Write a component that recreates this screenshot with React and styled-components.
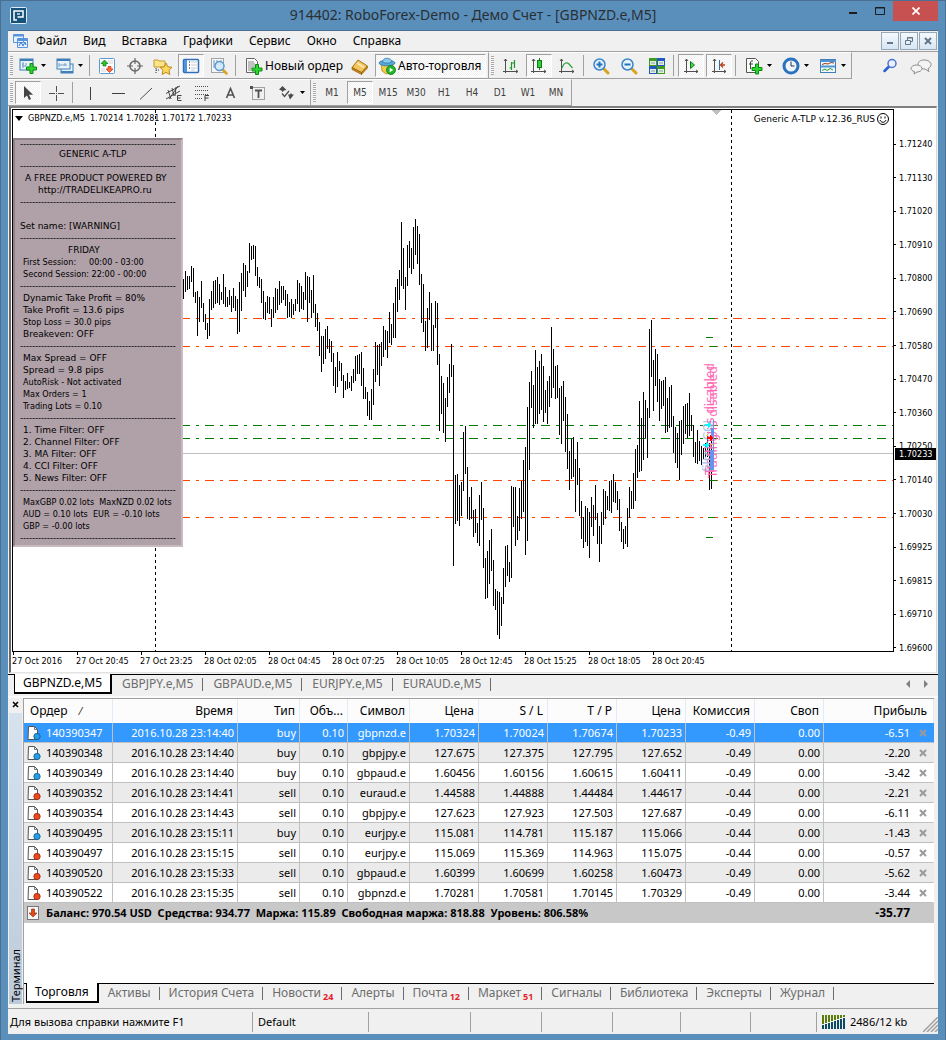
import React from 'react';
import styled, { createGlobalStyle, css } from 'styled-components';

const ui = '"Noto Sans", "Open Sans", sans-serif';
const chartFont = '"DejaVu Sans Condensed", "DejaVu Sans", sans-serif';
const wideFont = '"DejaVu Sans", sans-serif';

const Global = createGlobalStyle`
  *, *::before, *::after { box-sizing: border-box; }
  body { margin: 0; background: #5a8fbc; }
  button { font: inherit; color: inherit; border: 0; padding: 0; margin: 0; background: none; }
  svg { display: block; flex: none; }
`;

/* ---------- window ---------- */

const Window = styled.div`
  min-height: 100vh;
  display: flex;
  flex-direction: column;
  padding: 0 7px 7px;
  background: #5a8fbc;
  border: 1px solid #4a6f93;
  font: 12px/16px ${ui};
  color: #000;
`;

const TitleBar = styled.header`
  display: grid;
  grid-template-columns: 99px 1fr 99px;
  height: 29px;
`;

const AppIcon = styled.span`
  padding: 6px 0 0 2px;
`;

const Title = styled.h1`
  margin: 0;
  padding-top: 4px;
  text-align: center;
  font: 14px/20px ${ui};
  color: #2b2f33;
  white-space: nowrap;
`;

const Controls = styled.div`
  display: flex;
`;

const Control = styled.button`
  width: ${(p) => (p.$close ? 45 : 27)}px;
  height: 20px;
  display: grid;
  place-items: center;
  background: ${(p) => (p.$close ? '#c75050' : 'transparent')};
`;

const Client = styled.main`
  flex: 1;
  display: flex;
  flex-direction: column;
  background: #f0f0f0;
  border: solid #4a6f93;
  border-width: 1px 0 0;
`;

/* ---------- menu ---------- */

const MenuBar = styled.nav`
  display: flex;
  align-items: center;
  height: 21px;
  border-bottom: 1px solid #a0a0a0;
  padding-left: 5px;
`;

const MenuItem = styled.button`
  padding: 0 8px;
  line-height: 20px;
  font-size: 12px;
`;

const MdiButtons = styled.div`
  display: flex;
  gap: 1px;
  margin-left: auto;
  padding-right: 1px;
`;

const MdiButton = styled.button`
  width: 18px;
  height: 18px;
  display: grid;
  place-items: center;
  border: 1px solid #98a8b8;
  background: linear-gradient(#f4f9fd, #d6e6f4);
`;

/* ---------- toolbars ---------- */

const ToolRow = styled.div`
  display: flex;
  height: 27px;
`;

const Band = styled.div`
  display: flex;
  align-items: center;
  padding: 0 1px 0 2px;
  border-top: 1px solid #fff;
  border-bottom: 1px solid #a0a0a0;
  border-right: 1px solid #a0a0a0;
`;

const Grip = styled.span`
  width: 3px;
  height: 19px;
  background: repeating-linear-gradient(#a8a8a8 0 1px, #f8f8f8 1px 2px);
  margin-right: ${(p) => p.$gap || 0}px;
`;

const Separator = styled.span`
  width: 1px;
  height: 21px;
  margin: 0 3px 0 2px;
  background: #a0a0a0;
`;

const pressedStyle = css`
  border: 1px solid #a0a0a0;
  border-right-color: #fff;
  border-bottom-color: #fff;
  background: repeating-conic-gradient(#f0f0f0 0 25%, #fff 0 50%) 0 0 / 2px 2px;
`;

const Tool = styled.button`
  width: 26px;
  height: 23px;
  margin: 0 1px;
  display: grid;
  place-items: center;
  font: 10px/12px ${chartFont};
  color: #404040;
  ${(p) => p.$pressed && pressedStyle}
`;

const DropTool = styled.button`
  width: 37px;
  height: 23px;
  padding-left: 6px;
  display: flex;
  align-items: center;
  gap: 4px;
`;

const TextTool = styled.button`
  height: 23px;
  padding: 0 ${(p) => (p.$pressed ? 4 : 3)}px 0 ${(p) => (p.$pressed ? 2 : 6)}px;
  margin: 0 ${(p) => (p.$pressed ? 1 : 0)}px;
  display: flex;
  align-items: center;
  gap: 2px;
  font-size: 12px;
  white-space: nowrap;
  ${(p) => p.$pressed && pressedStyle}
`;

const RightTools = styled.div`
  display: flex;
  align-items: center;
  gap: 12px;
  margin-left: auto;
  padding-right: 6px;
`;

/* ---------- chart ---------- */

const ChartSection = styled.section`
  flex: 1;
  display: flex;
  flex-direction: column;
  margin: 0 1px;
  padding: 1px 0 0 1px;
  background: #fff;
  border: solid #696969;
  border-width: 2px 0 0 2px;
  border-top-color: #808080;
  border-right: 1px solid #d8d8d8;
  border-bottom: 1px solid #e3e3e3;
  font: 9px/12px ${chartFont};
`;

const PlotRow = styled.div`
  flex: 1;
  display: flex;
`;

const Plot = styled.div`
  flex: 1;
  min-width: 0;
  min-height: 543px;
  position: relative;
  overflow: hidden;
  border: 1px solid #000;
`;

const PlotSvg = styled.svg`
  position: absolute;
  inset: 0;
`;

const Quote = styled.div`
  position: absolute;
  left: 2px;
  top: 2px;
  display: flex;
  align-items: center;
  gap: 5px;
  white-space: pre;
`;

const ExpertName = styled.div`
  position: absolute;
  right: 4px;
  top: 3px;
  display: flex;
  align-items: center;
  gap: 2px;
  font-family: ${wideFont};
`;

const InfoPanel = styled.aside`
  position: absolute;
  left: 0;
  top: 28px;
  width: 170px;
  padding: 0 0 1px 5px;
  background: #b0a1a8;
  border: 2px solid #8f8187;
  border-right-color: #c9b9c0;
  border-bottom-color: #c9b9c0;
  white-space: pre;
`;

const InfoLine = styled.div`
  height: 12px;
  padding-left: ${(p) => p.$pad ?? 3}px;
  font-family: ${(p) => (p.$wide ? wideFont : chartFont)};
`;

const InfoRule = styled.div`
  height: ${(p) => (p.$first ? 8 : 12)}px;
  font-family: "Liberation Sans", sans-serif;
  line-height: ${(p) => (p.$first ? 8 : 12)}px;
`;

const PriceAxis = styled.div`
  position: relative;
  width: 42px;
  display: flex;
  flex-direction: column;
  justify-content: space-between;
  padding: 29px 0 0;
  margin-bottom: -2px;
`;

const PriceTick = styled.span`
  display: flex;
  align-items: center;
  gap: 3px;
  &::before { content: ''; width: 2px; height: 1px; background: #000; }
`;

const LastPrice = styled.span`
  position: absolute;
  left: 1px;
  right: 0;
  top: 339px;
  padding-left: 4px;
  background: #000;
  color: #fff;
`;

const TimeAxis = styled.div`
  display: flex;
  height: 20px;
  overflow: hidden;
`;

const TimeTick = styled.span`
  flex: 0 0 64px;
  white-space: nowrap;
  &::before { content: ''; display: block; width: 1px; height: 3px; margin-left: 1px; background: #000; }
`;

/* ---------- tabs ---------- */

const TabStrip = styled.div`
  display: flex;
  align-items: flex-start;
  height: ${(p) => (p.$low ? 21 : 22)}px;
  margin-top: ${(p) => (p.$low ? 0 : 1)}px;
  padding-left: ${(p) => (p.$low ? 2 : 6)}px;
  border-top: 1px solid #000;
  color: #6d6d6d;
`;

const Tab = styled.button`
  position: relative;
  display: flex;
  align-items: center;
  height: 18px;
  padding: 0 ${(p) => p.$pad}px;
  white-space: nowrap;
  ${(p) =>
    p.$active
      ? css`
          margin-top: -1px;
          height: 20px;
          background: #fff;
          color: #000;
          border: solid #000;
          border-width: 0 2px 2px 1px;
          padding: 0 8px;
        `
      : css`
          &::after { content: ''; position: absolute; right: 0; top: 3px; height: 13px; width: 1px; background: #6d6d6d; }
        `}
`;

const Count = styled.b`
  align-self: flex-end;
  font: bold 9px/10px ${ui};
  color: #e8202c;
  padding-left: 2px;
`;

const TabArrows = styled.div`
  display: flex;
  gap: 14px;
  margin-left: auto;
  padding: 5px 10px 0 0;
`;

/* ---------- terminal ---------- */

const Terminal = styled.section`
  display: grid;
  grid-template-columns: 15px 1fr;
  padding: 0 4px 0 0;
  border-top: 2px solid #fafafa;
`;

const Side = styled.div`
  display: flex;
  flex-direction: column;
  align-items: center;
  margin: 0 1px;
`;

const SideLabel = styled.div`
  flex: 1;
  width: 13px;
  margin-top: 2px;
  padding-top: 2px;
  background: linear-gradient(#bccada, #d6e3ef);
  writing-mode: vertical-rl;
  transform: rotate(180deg);
  font-size: 11px;
  line-height: 13px;
`;

const Book = styled.div`
  border: solid #a0a0a0;
  border-width: 1px 0 0 1px;
  min-width: 0;
`;

const Sheet = styled.div`
  background: #fff;
  min-height: 284px;
`;

const Orders = styled.table`
  width: 100%;
  table-layout: fixed;
  border-collapse: separate;
  border-spacing: 0;
  font-size: 12px;
`;

const Head = styled.th`
  height: 24px;
  padding: 0 ${(p) => p.$right || 4}px 0 6px;
  font-weight: normal;
  text-align: ${(p) => (p.$left ? 'left' : 'right')};
  border-right: 1px solid #e2ecf8;
  background: #fcfcfc;
  white-space: nowrap;
`;

const Row = styled.tr`
  color: ${(p) => (p.$selected ? '#fff' : '#000')};
  background: ${(p) => (p.$selected ? '#3399ff' : p.$shade ? '#ebebeb' : '#fff')};
`;

const Cell = styled.td`
  height: 20px;
  padding: 0 3px 0 0;
  font-size: 11px;
  line-height: 19px;
  text-align: right;
  white-space: nowrap;
  border-right: 1px solid #c0c0c0;
  border-bottom: 1px solid #c0c0c0;
  &:last-child { border-right-color: transparent; }
`;

const CellInner = styled.span`
  display: flex;
  align-items: center;
  justify-content: ${(p) => (p.$end ? 'flex-end' : 'flex-start')};
  gap: ${(p) => (p.$end ? 9 : 5)}px;
  padding: 0 ${(p) => (p.$end ? 3 : 0)}px 0 2px;
`;

const CloseOrder = styled.button`
  display: grid;
  place-items: center;
`;

const TotalCell = styled.td`
  height: 20px;
  padding: 0 ${(p) => (p.$end ? 24 : 0)}px 0 0;
  background: #c8c8c8;
  font-weight: bold;
  font-size: ${(p) => (p.$end ? 12 : 11)}px;
  white-space: pre;
  text-align: ${(p) => (p.$end ? 'right' : 'left')};
`;

/* ---------- status bar ---------- */

const StatusBar = styled.footer`
  display: flex;
  height: 26px;
  margin-top: 4px;
  border-top: 1px solid #a0a0a0;
  padding: 3px 0 2px;
`;

const StatusCell = styled.span`
  flex: ${(p) => (p.$w ? `0 0 ${p.$w}px` : '1 0 0')};
  display: flex;
  align-items: center;
  gap: 4px;
  padding-left: ${(p) => (p.$w ? 5 : 2)}px;
  font-size: 11px;
  white-space: nowrap;
  border-right: ${(p) => (p.$last ? 0 : 1)}px solid #a0a0a0;
`;

const ResizeGrip = styled.svg`
  margin-left: auto;
  align-self: flex-end;
`;

/* ---------- icons ---------- */

const Icon = ({ w = 18, h = 18, children }) => (
  <svg width={w} height={h} viewBox={`0 0 ${w} ${h}`} fill="none" aria-hidden="true">
    {children}
  </svg>
);

const Caret = () => (
  <Icon w={5} h={3}>
    <path d="M0 0h5L2.5 3z" fill="#000" />
  </Icon>
);

const Plus = ({ x, y }) => (
  <path
    transform={`translate(${x} ${y})`}
    d="M4 .5h3V4h3.5v3H7v3.500H4V7H.5V4H4z"
    fill="#2fd52f"
    stroke="#0a8a12"
  />
);

const icons = {
  newChart: (
    <Icon>
      <rect x="1" y="2" width="13" height="11" fill="#e6f2fc" stroke="#3f7fb5" />
      <path d="M1 3h13" stroke="#3f7fb5" strokeWidth="2" />
      <path d="M4 5v6M3 7h2M3 9h4M7 6v3" stroke="#7aa0c0" />
      <Plus x="7" y="6" />
    </Icon>
  ),
  profiles: (
    <Icon>
      <rect x="5" y="7" width="12" height="9" fill="#e6f2fc" stroke="#3f7fb5" />
      <rect x="1" y="2" width="13" height="10" fill="#e6f2fc" stroke="#3f7fb5" />
      <path d="M1 3h13M5 15h12" stroke="#3f7fb5" strokeWidth="2" />
      <path d="M3 6v4M3 8h8M9 6v3" stroke="#7aa0c0" />
    </Icon>
  ),
  market: (
    <Icon>
      <rect x="1.500" y="1.500" width="15" height="15" rx="1" fill="#fff" stroke="#5b9bd0" />
      <path d="M10 4h5M11 6h4M3 12h4M3 14h5" stroke="#d4d4d4" />
      <path d="M6.500 3l3.500 3.500H8v2.500H5V6.500H3z" fill="#2ec22e" stroke="#0b7d12" strokeWidth=".7" />
      <path d="M11.500 15.500L8 12H10V9.500h3V12h2z" fill="#ff6a3a" stroke="#c03010" strokeWidth=".7" />
    </Icon>
  ),
  crosshairNav: (
    <Icon>
      <circle cx="9" cy="9" r="5" stroke="#666" strokeWidth="1.500" />
      <path d="M9 1v6M9 11v6M1 9h6M11 9h6" stroke="#666" strokeWidth="1.200" />
    </Icon>
  ),
  navigator: (
    <Icon w={20}>
      <path d="M1 3h4l1 1h6v6H1z" fill="#fbe48a" stroke="#c79b28" />
      <path d="M3 11v5M3 13h4" stroke="#333" strokeDasharray="1 1" />
      <path d="M13 6l1.800 3.800 4.200.5-3 2.900.8 4.300-3.800-2.100L9.200 17.500l.8-4.300-3-2.900 4.200-.5z" fill="#ffd75a" stroke="#b98a1e" />
    </Icon>
  ),
  terminal: (
    <Icon>
      <rect x="1.500" y="2.500" width="15" height="13" rx="1" fill="#fff" stroke="#2d6fb8" strokeWidth="1.500" />
      <path d="M3.500 3v12" stroke="#4c94e0" strokeWidth="3" />
      <path d="M7 5h1M7 8h1M7 11h1" stroke="#000" />
      <path d="M9 5h6M9 8h6M9 11h6M9 13h4" stroke="#c4ccd4" />
    </Icon>
  ),
  tester: (
    <Icon>
      <rect x="1.500" y="1.500" width="12" height="14" fill="#f4f8fb" stroke="#a3a3a3" />
      <path d="M4 3v8M7 3v5M11 3v5" stroke="#6d93b8" />
      <path d="M12.500 12.500l4 4" stroke="#d8a420" strokeWidth="2.500" strokeLinecap="round" />
      <circle cx="9.500" cy="9" r="4.500" fill="#cfe6fa" fillOpacity=".85" stroke="#5b9bd0" strokeWidth="1.500" />
    </Icon>
  ),
  newOrder: (
    <Icon>
      <path d="M1.500 1.500h8l3 3v11h-11z" fill="#f8f8f8" stroke="#666" />
      <path d="M3 5h6M3 7h7M3 9h7M3 11h4M3 13h3" stroke="#8a8a8a" />
      <Plus x="6.500" y="7" />
    </Icon>
  ),
  book: (
    <Icon>
      <path d="M7 3l9.500 6-6 6.500L1 10.500z" fill="#f3c55e" stroke="#a9740f" />
      <path d="M1 10.500l9.500 5v2L1 12.500zM10.500 17.500l6-6.500V9l-6 6.500z" fill="#c98a1c" stroke="#8a5c08" strokeWidth=".6" />
      <path d="M6 6l7 4.500" stroke="#fbe7ae" strokeWidth="2" />
    </Icon>
  ),
  autoTrade: (
    <Icon>
      <path d="M3 7h12l-2 8-5 2-4-3z" fill="#f2c94c" stroke="#b78b17" strokeWidth=".8" />
      <ellipse cx="9" cy="6" rx="8" ry="2.800" fill="#58a6d8" stroke="#2f77a8" strokeWidth=".8" />
      <path d="M4.500 5c0-5 9-5 9 0-2 1.500-7 1.500-9 0z" fill="#8ccbee" stroke="#2f77a8" strokeWidth=".8" />
      <circle cx="13" cy="13" r="4.500" fill="#22b52a" stroke="#0a7d12" strokeWidth=".8" />
      <path d="M11.700 10.700v4.600l3.600-2.300z" fill="#fff" />
    </Icon>
  ),
  bars: (
    <Icon>
      <path d="M3.500 2v14M1 14.500h15M2 4l1.500-2L5 4M14 13l2 1.500-2 1.500" stroke="#505050" />
      <path d="M9.500 5v8M7.500 11h2M9.500 6h2.500M12.500 3v8" stroke="#199a26" strokeWidth="1.200" />
    </Icon>
  ),
  candles: (
    <Icon>
      <path d="M3.500 2v14M1 14.500h15M2 4l1.500-2L5 4M14 13l2 1.500-2 1.500" stroke="#505050" />
      <path d="M9.500 1v12" stroke="#0b7d12" />
      <rect x="7.500" y="3.500" width="4" height="7" fill="#34d13c" stroke="#0b7d12" />
    </Icon>
  ),
  line: (
    <Icon>
      <path d="M3.500 2v14M1 14.500h15M2 4l1.500-2L5 4M14 13l2 1.500-2 1.500" stroke="#505050" />
      <path d="M4 11c2-6 5-6 7-4l3.500 4" stroke="#2fa53a" strokeWidth="1.200" />
    </Icon>
  ),
  zoomIn: (
    <Icon>
      <path d="M11.500 11.500l4.500 4.500" stroke="#d8a420" strokeWidth="3" strokeLinecap="round" />
      <circle cx="7.500" cy="7.500" r="5.500" fill="#e4f2fd" stroke="#3b85c8" strokeWidth="1.500" />
      <path d="M7.500 4.500v6M4.500 7.500h6" stroke="#2672b8" strokeWidth="2" />
    </Icon>
  ),
  zoomOut: (
    <Icon>
      <path d="M11.500 11.500l4.500 4.500" stroke="#d8a420" strokeWidth="3" strokeLinecap="round" />
      <circle cx="7.500" cy="7.500" r="5.500" fill="#e4f2fd" stroke="#3b85c8" strokeWidth="1.500" />
      <path d="M4.500 7.500h6" stroke="#2672b8" strokeWidth="2" />
    </Icon>
  ),
  tile: (
    <Icon>
      <path d="M1 1h8v8H1zM9 9h8v8H9z" fill="#3f9a1e" />
      <path d="M9 1h8v8H9zM1 9h8v8H1z" fill="#2458c4" />
      <path d="M2 4h6v4H2zM10 4h6v4h-6zM2 12h6v4H2zM10 12h6v4h-6z" fill="#e4f0dc" />
      <path d="M3 6h4M11 6h4M3 14h4M11 14h4" stroke="#7ba0b8" />
    </Icon>
  ),
  scroll: (
    <Icon>
      <path d="M4.500 2v14M2 14.500h14M3 4l1.500-2L6 4M14 13l2 1.500-2 1.500" stroke="#505050" />
      <path d="M8.500 4.500v7l4-3.500z" fill="#4ad04f" stroke="#0b7d12" />
    </Icon>
  ),
  shift: (
    <Icon>
      <path d="M4.500 2v14M2 14.500h14M3 4l1.500-2L6 4M14 13l2 1.500-2 1.500" stroke="#505050" />
      <path d="M9.500 3v10" stroke="#2672b8" />
      <path d="M15 8h-4M13 5.500L10.500 8l2.500 2.500" stroke="#b8401a" strokeWidth="1.300" />
    </Icon>
  ),
  indicators: (
    <Icon>
      <path d="M1.500 1.500h9l3 3v11h-12z" fill="#fafafa" stroke="#555" />
      <path d="M8 4c-2-.5-2.500.5-2.500 2v6M4 7h4" stroke="#444" />
      <Plus x="6.500" y="6.500" />
    </Icon>
  ),
  clock: (
    <Icon>
      <circle cx="9" cy="9" r="7" fill="#eef6fd" stroke="#2a72c0" strokeWidth="3" />
      <path d="M9 4.500V9h3.500" stroke="#333" />
    </Icon>
  ),
  template: (
    <Icon>
      <rect x="1.500" y="2.500" width="15" height="13" fill="#f2f8fd" stroke="#3f7fb5" />
      <path d="M1 4h16M2 9.500h14" stroke="#4f94d4" strokeWidth="2" />
      <path d="M3 7.500l3-1 3 .5 3-1.500 3 .5" stroke="#9a3a1a" />
      <path d="M3 13.500l3-1.500 2 1.500 3-2 3 1.500" stroke="#2a9a34" />
    </Icon>
  ),
  search: (
    <Icon w={15} h={15}>
      <path d="M6 8.500L1.500 13" stroke="#2a5fd0" strokeWidth="2.500" strokeLinecap="round" />
      <circle cx="9" cy="5.500" r="4" fill="#eaf1fc" stroke="#4a72d0" strokeWidth="1.500" />
    </Icon>
  ),
  chat: (
    <Icon w={22}>
      <path d="M14 3c4 0 7 2 7 4.500 0 2-1 3-3 4l1 3-4-2.500c-4 0-7-2-7-4.500S10 3 14 3z" fill="#f4f4f4" stroke="#8a8a8a" />
      <path d="M6.500 8c3 0 5.500 1.500 5.500 3.500S9.500 15 7 15l-3 2 .5-2.500c-2-.5-3.500-1.500-3.500-3C1 9.500 3.500 8 6.500 8z" fill="#f4f4f4" stroke="#8a8a8a" />
    </Icon>
  ),
  arrow: (
    <Icon>
      <path d="M5 2v12l3-2.500 2 4.500 2-1-2-4.300h4z" fill="#444" />
    </Icon>
  ),
  cross: (
    <Icon>
      <path d="M9.500 2v6M9.500 11v6M2 9.500h6M11 9.500h6M9 9.500h1" stroke="#505050" />
    </Icon>
  ),
  vline: (
    <Icon>
      <path d="M9.500 3v13" stroke="#404040" />
    </Icon>
  ),
  hline: (
    <Icon>
      <path d="M3 9.500h13" stroke="#404040" />
    </Icon>
  ),
  trend: (
    <Icon>
      <path d="M3 15.500L15 4" stroke="#505050" />
    </Icon>
  ),
  channel: (
    <Icon>
      <path d="M1 9.500L15 2M1 15L15 7M3 6l3 9M7 4l2 8M11 3l-1 9M13 2L4 15" stroke="#4a4a4a" />
      <path d="M16.500 11.500h-4v5h4M12.500 14h3" stroke="#404040" />
    </Icon>
  ),
  fibo: (
    <Icon>
      <path d="M2 2.500h14M2 6.500h14M2 10.500h14M2 14.500h8" stroke="#505050" strokeDasharray="1 1" />
      <path d="M16 11.500h-4V17M12 14h3.500" stroke="#404040" />
    </Icon>
  ),
  text: (
    <Icon>
      <path d="M5.500 14L9.500 4.500l4 9.500M6.500 11h6" stroke="#505050" strokeWidth="1.600" />
    </Icon>
  ),
  label: (
    <Icon>
      <rect x="3.500" y="3.500" width="12" height="12" stroke="#505050" strokeDasharray="1 1" />
      <path d="M1 2h3v3H1z" fill="#505050" />
      <path d="M6 6.500h7M9.500 6.500V14" stroke="#505050" strokeWidth="1.800" />
    </Icon>
  ),
  shapes: (
    <Icon>
      <path d="M4.500 2L8.500 6 6 6.500 4.500 8 3.500 6.500 1 5.500z" fill="#4a4a4a" />
      <path d="M10 10.500h2l1-1.500 1 1.500h2l-4 5z" fill="#4a4a4a" />
      <path d="M4 9.500l2.500 3L11 7" stroke="#4a4a4a" strokeWidth="1.200" />
    </Icon>
  ),
};

const OrderIcon = ({ sell }) => (
  <Icon w={15} h={16}>
    <path d="M2.500 1.500h6l3 3v10h-9.500z" fill="#fcfcfc" stroke="#555" />
    <path d="M8.500 1.500v3h3" stroke="#777" />
    <circle cx="11" cy="11.500" r="3.200" fill={sell ? '#e8491f' : '#2a9bdc'} stroke={sell ? '#98240a' : '#0c5c94'} strokeWidth=".8" />
  </Icon>
);

/* ---------- chart data: [high, low] in thirds of a pixel ---------- */

const morning = [
  [237,297],[213,276],[228,270],[228,267],[198,246],[204,291],[276,309],[273,408],[291,366],[243,324],
  [309,366],[342,390],[369,417],[297,408],[273,330],[243,324],[240,312],[231,309],[252,315],[276,300],
  [222,312],[261,321],[291,321],[270,315],[288,336],[264,324],[288,333],[297,402],[246,396],[219,333],
  [189,273],[195,291],[213,261],[129,219],[138,180],[135,177],[138,228],[201,258],[231,264],[237,309],
  [273,357],[306,360],[288,339],[291,342],[327,381],[291,354],[264,339],[267,330],[243,315],[258,309],
  [258,300],[270,318],[282,354],[306,351],[297,354],[312,345],[297,333],[240,312],[249,336],[258,327],
  [276,330],[216,300],[228,366],[231,309],[270,354],[225,339],[312,381],[339,393],[366,468],[408,516],
  [408,492],[387,477],[378,447],[417,459],[423,486],[459,558],[501,579],[456,561],[483,513],[489,543],
  [525,594],[543,570],[519,567],[546,564],[528,573],[507,549],[468,543],[465,522],[462,522],[456,558],
  [504,597],[561,597],[576,648],[603,660],[567,660],[507,615],[426,546],[435,525],[432,558],[426,498],
  [378,471],[390,450],[393,474],[336,429],[372,435],[309,414],[261,414],[237,336],[210,300],[66,258],
  [144,267],[231,330],[135,258],[123,204],[144,222],[81,207],[57,165],[78,192],[102,255],[222,369],
  [252,396],[363,453],[324,444],[276,360],
];

const afternoon = [
  [69,213],[135,213],[63,144],[69,255],[222,453],[288,402],[309,459],[354,486],[291,381],[252,339],
  [192,291],[255,858],[585,732],[582,723],[615,738],[606,708],[456,633],[438,582],[561,717],[651,720],
  [621,717],[690,771],[687,759],[729,789],[645,798],[606,720],[684,864],[834,957],[813,954],[780,912],
  [747,873],[840,978],[927,990],[933,1065],[936,1077],[951,1038],[864,972],[798,921],[795,888],[846,906],
  [618,894],[621,741],[621,798],[708,780],[624,753],[603,717],[540,696],[501,825],[381,783],[306,570],
  [273,384],[315,444],[210,432],[261,432],[243,402],[222,390],[258,426],[330,399],[303,432],[288,381],
  [141,354],[207,324],[258,357],[255,354],[324,465],[318,492],[303,423],[351,516],[402,567],[513,630],
  [477,597],[471,591],[537,696],[486,615],[564,708],[663,777],[711,804],[678,786],[684,798],[696,834],
  [651,741],[675,768],[615,720],[699,792],[738,846],[696,792],[627,735],[633,717],[648,690],[603,693],
  [600,699],[582,666],[606,669],[633,690],[657,753],[726,786],[747,807],[738,792],[684,801],[621,714],
  [633,687],[579,687],[507,663],[495,594],[363,576],[414,573],[336,540],[360,474],[384,534],[147,414],
  [120,291],[240,393],[207,318],[222,366],[297,423],[303,387],[300,378],[291,459],[354,456],[321,444],
  [315,441],[408,519],[441,549],[459,564],[423,600],[420,525],[378,492],[372,462],[369,474],[339,468],
  [405,453],[435,531],[486,549],[450,552],[483,543],[498,555],[504,540],[489,531],[468,531],[489,630],
  [480,627],
];

const bars = [
  ...morning.map(([h, l]) => [90 + Math.round(h / 3), Math.round((l - h) / 3)]),
  ...afternoon.map(([h, l]) => [170 + Math.round(h / 3), Math.round((l - h) / 3)]),
];

const levels = [
  [208, '#ff4500'],
  [236, '#ff4500'],
  [315, '#008000'],
  [328, '#008000'],
  [370, '#ff4500'],
  [407, '#ff4500'],
];

const marks = [[695, 208], [693, 227], [697, 236], [697, 370], [695, 407], [693, 427]];

const Diamond = ({ x, y, fill }) => (
  <path d={`M${x} ${y - 3}v2h-3v2h3v2l3-3z`} fill={fill} />
);

const PriceChart = () => (
  <PlotSvg width="100%" height="100%" shapeRendering="crispEdges" role="img" aria-label="GBPNZD.e,M5">
    {levels.map(([y, c]) => (
      <line key={y} x1="0" x2="100%" y1={y + 0.5} y2={y + 0.5} stroke={c} strokeDasharray="9 6 3 6" />
    ))}
    <line x1="0" x2="100%" y1="343.500" y2="343.500" stroke="#c0c0c0" />
    <path d="M142.500 0V2000M718.500 0V2000" stroke="#000" strokeDasharray="3 3" />
    {bars.map(([y, h], i) => (
      <rect key={i} x={170 + i * 2} y={y} width="1" height={h} fill="#000" />
    ))}
    {marks.map(([x, y]) => (
      <rect key={`${x}-${y}`} x={x} y={y} width="7" height="1" fill="#008000" />
    ))}
    <g fontFamily={wideFont} fontSize="12">
      <text transform="translate(699 362) rotate(-90)" fill="#a0c8f0">filter CCI</text>
      <text transform="translate(701 365) rotate(-90)" fill="#ff69b4">Trading is disabled</text>
      <text transform="translate(704 368) rotate(-90)" fill="#ff69b4">Trading is disabled</text>
    </g>
    <path d="M698 318h2v8h-2zM697 340h3v20h-3z" fill="#6495ed" />
    <path d="M700 310v50" stroke="#6495ed" />
    <Diamond x={695} y={315} fill="#00ffff" />
    <Diamond x={693} y={335} fill="#00ffff" />
    <Diamond x={697} y={328} fill="#ff0000" />
    <path d="M693 325h2v1h-2zM698 334h2v1h-2z" fill="#ffe000" />
    <path d="M698 0h10l-5 5z" fill="#c0c0c0" />
  </PlotSvg>
);

const rule = '-'.repeat(52);
const info = [
  { rule: true, first: true },
  { t: 'GENERIC A-TLP', w: true, p: 39 },
  { rule: true },
  { t: 'A FREE PRODUCT POWERED BY', w: true, p: 5 },
  { t: 'http://TRADELIKEAPRO.ru', w: true, p: 18 },
  { rule: true },
  { t: '' },
  { t: 'Set name: [WARNING]', w: true, p: 0 },
  { rule: true },
  { t: 'FRIDAY', w: true, p: 48 },
  { t: 'First Session:     00:00 - 03:00' },
  { t: 'Second Session: 22:00 - 00:00' },
  { rule: true },
  { t: 'Dynamic Take Profit = 80%', w: true },
  { t: 'Take Profit = 13.6 pips', w: true },
  { t: 'Stop Loss = 30.0 pips' },
  { t: 'Breakeven: OFF', w: true },
  { rule: true },
  { t: 'Max Spread = OFF', w: true },
  { t: 'Spread = 9.8 pips', w: true },
  { t: 'AutoRisk - Not activated' },
  { t: 'Max Orders = 1' },
  { t: 'Trading Lots = 0.10' },
  { rule: true },
  { t: '1. Time Filter: OFF', w: true },
  { t: '2. Channel Filter: OFF', w: true },
  { t: '3. MA Filter: OFF', w: true },
  { t: '4. CCI Filter: OFF', w: true },
  { t: '5. News Filter: OFF', w: true },
  { rule: true },
  { t: 'MaxGBP 0.02 lots  MaxNZD 0.02 lots' },
  { t: 'AUD = 0.10 lots  EUR = -0.10 lots' },
  { t: 'GBP = -0.00 lots' },
  { rule: true },
];

const prices = ['1.71240', '1.71130', '1.71020', '1.70910', '1.70800', '1.70690', '1.70580', '1.70470', '1.70360', '1.70250', '1.70140', '1.70030', '1.69925', '1.69815', '1.69710', '1.69600'];
const times = ['27 Oct 2016', '27 Oct 20:45', '27 Oct 23:25', '28 Oct 02:05', '28 Oct 04:45', '28 Oct 07:25', '28 Oct 10:05', '28 Oct 12:45', '28 Oct 15:25', '28 Oct 18:05', '28 Oct 20:45'];

const orders = [
  ['140390347', '23:14:40', 'buy', 'gbpnzd.e', '1.70324', '1.70024', '1.70674', '1.70233', '-0.49', '-6.51'],
  ['140390348', '23:14:40', 'buy', 'gbpjpy.e', '127.675', '127.375', '127.795', '127.652', '-0.49', '-2.20'],
  ['140390349', '23:14:40', 'buy', 'gbpaud.e', '1.60456', '1.60156', '1.60615', '1.60411', '-0.49', '-3.42'],
  ['140390352', '23:14:41', 'sell', 'euraud.e', '1.44588', '1.44888', '1.44484', '1.44617', '-0.44', '-2.21'],
  ['140390354', '23:14:43', 'sell', 'gbpjpy.e', '127.623', '127.923', '127.503', '127.687', '-0.49', '-6.11'],
  ['140390495', '23:15:11', 'buy', 'eurjpy.e', '115.081', '114.781', '115.187', '115.066', '-0.44', '-1.43'],
  ['140390497', '23:15:15', 'sell', 'eurjpy.e', '115.069', '115.369', '114.963', '115.075', '-0.44', '-0.57'],
  ['140390520', '23:15:33', 'sell', 'gbpaud.e', '1.60399', '1.60699', '1.60258', '1.60473', '-0.49', '-5.62'],
  ['140390522', '23:15:35', 'sell', 'gbpnzd.e', '1.70281', '1.70581', '1.70145', '1.70329', '-0.49', '-3.44'],
];

const widths = [89, 125, 62, 48, 62, 69, 69, 69, 69, 69, 69];
const headings = ['Время', 'Тип', 'Объ...', 'Символ', 'Цена', 'S / L', 'T / P', 'Цена', 'Комиссия', 'Своп'];
const lowTabs = [['Активы'], ['История Счета'], ['Новости', 24], ['Алерты'], ['Почта', 12], ['Маркет', 51], ['Сигналы'], ['Библиотека'], ['Эксперты'], ['Журнал']];

const Drop = ({ icon, label }) => (
  <DropTool aria-label={label}>
    {icons[icon]}
    <Caret />
  </DropTool>
);

const IconTool = ({ icon, label, pressed }) => (
  <Tool $pressed={pressed} aria-label={label}>
    {icons[icon]}
  </Tool>
);

export default function App() {
  return (
    <Window>
      <Global />
      <TitleBar>
        <AppIcon>
          <Icon w={17} h={17}>
            <rect x=".5" y=".5" width="16" height="16" rx="1" fill="#14527c" stroke="#dcecf6" />
            <path d="M7 13H4V4h9v6H7.500" stroke="#fff" strokeWidth="1.500" />
            <path d="M7 7h3" stroke="#fff" strokeWidth="1.200" />
          </Icon>
        </AppIcon>
        <Title>914402: RoboForex-Demo - Демо Счет - [GBPNZD.e,M5]</Title>
        <Controls>
          <Control aria-label="Свернуть">
            <Icon w={10} h={10}><path d="M1 7h8" stroke="#1c1c1c" strokeWidth="2" /></Icon>
          </Control>
          <Control aria-label="Развернуть">
            <Icon w={10} h={10}><path d="M.5 1.500h9v7h-9zM0 2h10" stroke="#1c1c1c" /></Icon>
          </Control>
          <Control $close aria-label="Закрыть">
            <Icon w={8} h={8}><path d="M.5.5l7 7M7.500.5l-7 7" stroke="#fff" strokeWidth="1.700" /></Icon>
          </Control>
        </Controls>
      </TitleBar>

      <Client>
        <MenuBar>
          <Icon w={15} h={16}>
            <path d="M.5 1.500h10v8H.5zM4.500 5.500h10v9h-10z" fill="#e9f3fd" stroke="#5a93dc" />
            <path d="M1 2.500h10M5 7h9" stroke="#5a93dc" strokeWidth="2" />
            <path d="M6 13l2-4 2 4 2-4 1 3" stroke="#3c78c8" />
          </Icon>
          {['Файл', 'Вид', 'Вставка', 'Графики', 'Сервис', 'Окно', 'Справка'].map((m) => (
            <MenuItem key={m}>{m}</MenuItem>
          ))}
          <MdiButtons>
            <MdiButton aria-label="Свернуть окно">
              <Icon w={8} h={8}><path d="M1 6h6" stroke="#647687" strokeWidth="2" /></Icon>
            </MdiButton>
            <MdiButton aria-label="Восстановить окно">
              <Icon w={8} h={8}><path d="M.5 3.500h5v4h-5zM2.500 3V.5h5v4H6M2 1h6" stroke="#647687" /></Icon>
            </MdiButton>
            <MdiButton aria-label="Закрыть окно">
              <Icon w={8} h={8}><path d="M1 1l6 6M7 1L1 7" stroke="#647687" strokeWidth="2" /></Icon>
            </MdiButton>
          </MdiButtons>
        </MenuBar>

        <ToolRow>
          <Band>
            <Grip />
            <Drop icon="newChart" label="Новый график" />
            <Drop icon="profiles" label="Профили" />
            <Separator />
            <IconTool icon="market" label="Обзор рынка" />
            <IconTool icon="crosshairNav" label="Окно данных" />
            <IconTool icon="navigator" label="Навигатор" />
            <IconTool icon="terminal" label="Терминал" pressed />
            <IconTool icon="tester" label="Тестер стратегий" />
            <Separator />
            <TextTool>{icons.newOrder}Новый ордер</TextTool>
            <IconTool icon="book" label="MetaEditor" />
            <TextTool $pressed>{icons.autoTrade}Авто-торговля</TextTool>
          </Band>
          <Band>
            <Grip $gap={3} />
            <IconTool icon="bars" label="Бары" />
            <IconTool icon="candles" label="Свечи" pressed />
            <IconTool icon="line" label="Линия" />
            <Separator />
            <IconTool icon="zoomIn" label="Приблизить" />
            <IconTool icon="zoomOut" label="Отдалить" />
            <IconTool icon="tile" label="Расположить окна" />
            <Separator />
            <IconTool icon="scroll" label="Автопрокрутка" pressed />
            <IconTool icon="shift" label="Сдвиг графика" pressed />
            <Separator />
            <Drop icon="indicators" label="Индикаторы" />
            <Drop icon="clock" label="Периоды" />
            <Drop icon="template" label="Шаблоны" />
          </Band>
          <RightTools>
            <button aria-label="Поиск">{icons.search}</button>
            <button aria-label="Чат">{icons.chat}</button>
          </RightTools>
        </ToolRow>

        <ToolRow>
          <Band>
            <Grip $gap={1} />
            <IconTool icon="arrow" label="Курсор" pressed />
            <IconTool icon="cross" label="Перекрестие" />
            <Separator />
            <IconTool icon="vline" label="Вертикальная линия" />
            <IconTool icon="hline" label="Горизонтальная линия" />
            <IconTool icon="trend" label="Трендовая линия" />
            <IconTool icon="channel" label="Канал" />
            <IconTool icon="fibo" label="Фибоначчи" />
            <IconTool icon="text" label="Текст" />
            <IconTool icon="label" label="Метка" />
            <Drop icon="shapes" label="Стрелки" />
          </Band>
          <Band>
            <Grip $gap={2} />
            {['M1', 'M5', 'M15', 'M30', 'H1', 'H4', 'D1', 'W1', 'MN'].map((t) => (
              <Tool key={t} $pressed={t === 'M5'}>{t}</Tool>
            ))}
          </Band>
        </ToolRow>

        <ChartSection>
          <PlotRow>
            <Plot>
              <PriceChart />
              <Quote>
                <Icon w={8} h={5}><path d="M0 0h8L4 5z" fill="#000" /></Icon>
                <span>GBPNZD.e,M5  1.70214 1.70281 1.70172 1.70233</span>
              </Quote>
              <ExpertName>
                Generic A-TLP v.12.36_RUS
                <Icon w={12} h={12}>
                  <circle cx="6" cy="6" r="5.500" stroke="#000" />
                  <path d="M3 7c1 3 5 3 6 0M4 3.500v2M8 3.500v2" stroke="#000" />
                </Icon>
              </ExpertName>
              <InfoPanel>
                {info.map((l, i) =>
                  l.rule ? (
                    <InfoRule key={i} $first={l.first}>{rule}</InfoRule>
                  ) : (
                    <InfoLine key={i} $wide={l.w} $pad={l.p}>{l.t}</InfoLine>
                  )
                )}
              </InfoPanel>
            </Plot>
            <PriceAxis>
              {prices.map((p) => (
                <PriceTick key={p}>{p}</PriceTick>
              ))}
              <LastPrice>1.70233</LastPrice>
            </PriceAxis>
          </PlotRow>
          <TimeAxis>
            {times.map((t) => (
              <TimeTick key={t}>{t}</TimeTick>
            ))}
          </TimeAxis>
        </ChartSection>

        <TabStrip>
          <Tab $active>GBPNZD.e,M5</Tab>
          {['GBPJPY.e,M5', 'GBPAUD.e,M5', 'EURJPY.e,M5', 'EURAUD.e,M5'].map((t) => (
            <Tab key={t} $pad={10}>{t}</Tab>
          ))}
          <TabArrows>
            <Icon w={4} h={8}><path d="M4 0v8L0 4z" fill="#808080" /></Icon>
            <Icon w={4} h={8}><path d="M0 0v8l4-4z" fill="#808080" /></Icon>
          </TabArrows>
        </TabStrip>

        <Terminal>
          <Side>
            <button aria-label="Закрыть терминал">
              <Icon w={7} h={13}><path d="M1 4l5 5M6 4L1 9" stroke="#000" strokeWidth="1.500" /></Icon>
            </button>
            <SideLabel>Терминал</SideLabel>
          </Side>
          <Book>
            <Sheet>
              <Orders>
                <colgroup>
                  {widths.map((w, i) => (
                    <col key={i} width={w} />
                  ))}
                  <col />
                </colgroup>
                <thead>
                  <tr>
                    <Head $left>Ордер&nbsp;&nbsp;&nbsp;&nbsp;<small>⁄</small></Head>
                    {headings.map((h, i) => (
                      <Head key={i}>{h}</Head>
                    ))}
                    <Head $right={6}>Прибыль</Head>
                  </tr>
                </thead>
                <tbody>
                  {orders.map(([id, time, type, symbol, open, sl, tp, price, fee, profit], i) => (
                    <Row key={id} $selected={i === 0} $shade={i % 2 === 1}>
                      <Cell>
                        <CellInner>
                          <OrderIcon sell={type === 'sell'} />
                          {id}
                        </CellInner>
                      </Cell>
                      <Cell>2016.10.28 {time}</Cell>
                      <Cell>{type}</Cell>
                      <Cell>0.10</Cell>
                      <Cell>{symbol}</Cell>
                      <Cell>{open}</Cell>
                      <Cell>{sl}</Cell>
                      <Cell>{tp}</Cell>
                      <Cell>{price}</Cell>
                      <Cell>{fee}</Cell>
                      <Cell>0.00</Cell>
                      <Cell>
                        <CellInner $end>
                          {profit}
                          <CloseOrder aria-label="Закрыть ордер">
                            <Icon w={8} h={8}><path d="M1 1l6 6M7 1L1 7" stroke="#9a9a9a" strokeWidth="2" /></Icon>
                          </CloseOrder>
                        </CellInner>
                      </Cell>
                    </Row>
                  ))}
                  <tr>
                    <TotalCell colSpan={11}>
                      <CellInner>
                        <Icon w={15} h={14}>
                          <rect x="1.500" y=".5" width="11" height="13" fill="#f6f6f6" stroke="#777" />
                          <path d="M5.500 3h3v4H11l-4 4-4-4h2.500z" fill="#e04a1c" stroke="#8a2408" strokeWidth=".6" />
                        </Icon>
                        Баланс: 970.54 USD  Средства: 934.77  Маржа: 115.89  Свободная маржа: 818.88  Уровень: 806.58%
                      </CellInner>
                    </TotalCell>
                    <TotalCell $end>-35.77</TotalCell>
                  </tr>
                </tbody>
              </Orders>
            </Sheet>
            <TabStrip $low>
              <Tab $active>Торговля</Tab>
              {lowTabs.map(([t, n]) => (
                <Tab key={t} $pad={9}>
                  {t}
                  {n && <Count>{n}</Count>}
                </Tab>
              ))}
            </TabStrip>
          </Book>
        </Terminal>

        <StatusBar>
          <StatusCell>Для вызова справки нажмите F1</StatusCell>
          <StatusCell $w={116}>Default</StatusCell>
          <StatusCell $w={102} />
          <StatusCell $w={71} />
          <StatusCell $w={71} />
          <StatusCell $w={68} />
          <StatusCell $w={70} />
          <StatusCell $w={66} />
          <StatusCell $w={121} $last>
            <Icon w={24} h={14}>
              {[0, 1, 2, 3, 4, 5, 6, 7].map((i) => (
                <g key={i}>
                  <rect x={i * 3} y="0" width="2" height={9 - i} fill="#5b7d0e" />
                  <rect x={i * 3} y={10 - i} width="2" height={4 + i} fill="#0d4a66" />
                </g>
              ))}
            </Icon>
            2486/12 kb
            <ResizeGrip width="15" height="15" viewBox="0 0 15 15">
              <path d="M0 15L15 0M4 15L15 4M8 15l7-7M12 15l3-3" stroke="#a0a0a0" strokeWidth="1.500" />
            </ResizeGrip>
          </StatusCell>
        </StatusBar>
      </Client>
    </Window>
  );
}
